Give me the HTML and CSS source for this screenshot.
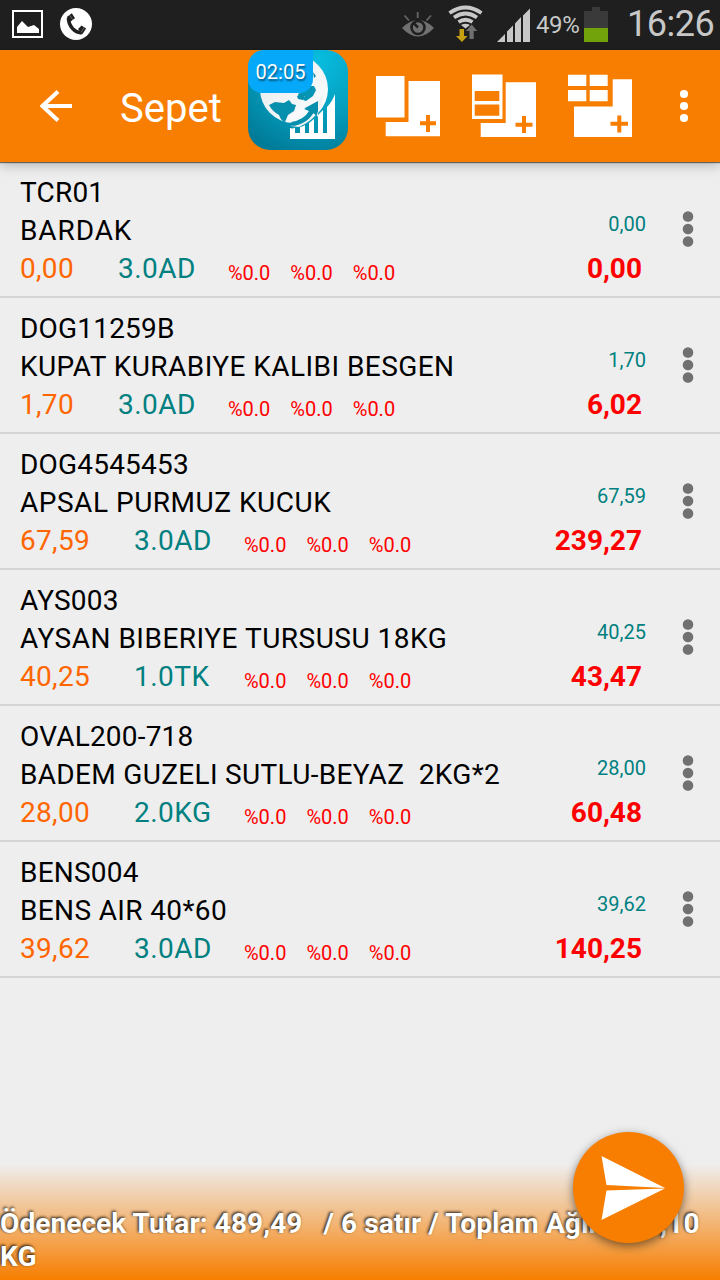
FILE: index.html
```html
<!DOCTYPE html>
<html lang="tr">
<head>
<meta charset="utf-8">
<title>Sepet</title>
<link rel="stylesheet" href="styles.css">
</head>
<body>
<div class="screen">
  <header class="status">
    <svg class="st-photo" width="32" height="50" viewBox="0 0 32 50"><rect x="1" y="11" width="29" height="26" fill="none" stroke="#fff" stroke-width="2"/><path d="M5 33v-6l5-6 6 6 6-2 5 4v4z" fill="#fff"/></svg>
    <svg class="st-call" width="32" height="50" viewBox="0 0 32 50"><circle cx="16" cy="24" r="16" fill="#fff"/><path d="M8.500 18C8.500 26 15 33.500 22 32.500" fill="none" stroke="#1f1f1f" stroke-width="3.600"/><path d="M6.800 17l5-3.700 3.200 4.900-4.800 3.600zM18 29l3.500-3.600 4.600 3-3.600 5.600z" fill="#1f1f1f"/><path d="M9.500 15l3.500 5M24.500 27.200l-3.500 5.200" stroke="#888" stroke-width=".7"/></svg>
    <svg class="st-eye" width="32" height="50" viewBox="0 0 32 50"><path d="M0 28Q16 12 32 28 16 45 0 28z" fill="#707070"/><circle cx="16" cy="27.500" r="6.500" fill="none" stroke="#1f1f1f" stroke-width="2.600"/><path d="M16 27.500l-4.500-4.500" stroke="#1f1f1f" stroke-width="2.500"/><path d="M15.700 12v6M2.500 15.500l4.500 5M29 15.500l-4.500 5" stroke="#666" stroke-width="1.800"/></svg>
    <svg class="st-wifi" width="36" height="50" viewBox="0 0 36 50"><g fill="none" stroke="#c8c8c8" stroke-width="3.800"><path d="M1.500 13Q17.500 2 33.500 13M6 17.500Q17.500 9.500 29 17.500M10.500 22q7-4.500 14 0"/></g><path d="M13 25q4.500-2.500 9 0l-4.500 3.500z" fill="#c8c8c8"/><path d="M11.500 29h4.500v7h3.500L14 42l-6-6h3.500z" fill="#c5a012"/><path d="M21.500 39v-8H18l5.700-6.500 5.500 6.500h-3.500v8z" fill="#707070"/></svg>
    <svg class="st-signal" width="34" height="50" viewBox="0 0 34 50"><path d="M0 42l8-8v8zM10 42V31.500l6-6V42zM18 42V23.500l6-6.500v25zM26 42V15.500l7-7V42z" fill="#c8c8c8"/></svg>
    <span class="percent">49%</span>
    <svg class="st-battery" width="24" height="50" viewBox="0 0 24 50"><path d="M0 11h8V7h8v4h8v17H0z" fill="#3a3a3a"/><path d="M0 28h24v14H0z" fill="#73a30b"/></svg>
    <span class="clock">16:26</span>
  </header>

  <nav class="toolbar">
    <svg class="back" width="32" height="32" viewBox="0 0 32 32"><path d="M18 1.500L2.500 16 18 30.500M2 16h30" fill="none" stroke="#fff" stroke-width="4"/></svg>
    <h1 class="title">Sepet</h1>
    <div class="app">
      <svg width="100" height="100" viewBox="0 0 100 100">
        <defs>
          <radialGradient id="teal" cx=".7" cy=".1" r="1"><stop offset="0" stop-color="#08bde0"/><stop offset=".55" stop-color="#059dbd"/><stop offset="1" stop-color="#007b98"/></radialGradient>
          <linearGradient id="globe" x1="0" y1="0" x2="1" y2="1"><stop offset="0" stop-color="#e4e8ea"/><stop offset="1" stop-color="#fff"/></linearGradient>
        </defs>
        <rect width="100" height="100" rx="22" fill="url(#teal)"/>
        <circle cx="46" cy="39" r="34" fill="url(#globe)"/>
        <path d="M66 36l2 4-3 6-7 5-3-1 2-4-6 2-1-4 7-4v-4z" fill="#0795b5"/>
        <path d="M21 55l6-3 9 1 5-3 3 4 4 1-2 6-6 4-3 7q-4-1-6-7-7-4-10-10z" fill="#078fae"/>
        <path d="M49 46l5-2 3 3-2 3-5-1z" fill="#078fae"/>
        <path d="M65 22l3 4-2 2z" fill="#078fae"/>
        <path d="M41 74Q56 71 62 61l-5-3 13-7v15l-4-3Q58 75 46 78z" fill="#078fae"/>
        <path d="M42 76Q59 75 66 62l4 5V51l5-6q-1 22-24 32z" fill="#eef2f3"/>
        <path d="M43 72Q56 70 61 61l-5-2 14-7-1 14-4-3Q58 73 46 76z" fill="#078fae"/>
        <path d="M42 78q3 1 5-.5V83h5v-6q3-.5 5-2v8h4V73l5-4v14h4V65l5-5v23h4V57q5-5 8-13v45H42z" fill="#fff"/>
      </svg>
      <span class="timer">02:05</span>
    </div>
    <svg class="tool t1" width="64" height="64" viewBox="0 0 64 64"><path d="M0 2h28.500v41.500H0zM32.500 7H64v55.300H9.700V48h22.800z" fill="#fff"/><path d="M52 41v17M44 49.300h16" stroke="#f77e00" stroke-width="4"/></svg>
    <svg class="tool t2" width="64" height="64" viewBox="0 0 64 64"><path d="M0 .5h30.500V45H0zM33.700 8.300H64V63H8.700V49h25z" fill="#fff"/><path d="M2.700 17h24.600v10H2.700zM2.700 30.500h24.600v11.300H2.700z" fill="#f77e00"/><path d="M52 42v17M43.500 50.700h17" stroke="#f77e00" stroke-width="4"/></svg>
    <svg class="tool t3" width="64" height="64" viewBox="0 0 64 64"><path d="M0 .7h18.300V12H0zM21.700.7h18V12h-18zM0 16h18.300v11.300H0zM21.700 16h18v11.300h-18zM44.700 5.300H64V63H6V32.500h38.700z" fill="#fff"/><path d="M51.300 41.500V58.500M42.500 49.800h17.500" stroke="#f77e00" stroke-width="4"/></svg>
    <svg class="overflow" width="10" height="34" viewBox="0 0 10 34"><g fill="#fff"><circle cx="5" cy="5" r="4.100"/><circle cx="5" cy="17" r="4.100"/><circle cx="5" cy="29" r="4.100"/></g></svg>
  </nav>

  <main class="list"></main>

  <footer class="summary">Ödenecek Tutar: 489,49&nbsp;&nbsp; / 6 satır / Toplam Ağırlık:&nbsp;4,10 KG</footer>
  <button class="send" aria-label="Gönder"><svg width="111" height="111" viewBox="0 0 111 111"><path d="M28.500 24L92 56 33.500 53zM28.500 88L92 56.400 33.500 58.500z" fill="#fff"/></svg></button>
</div>
<script src="list.js"></script>
</body>
</html>
```
FILE: styles.css
```css
* { box-sizing: border-box; }
body { margin: 0; background: #eee; font-family: Roboto, "Noto Sans", sans-serif; }
.screen { position: relative; width: 720px; height: 1280px; overflow: hidden; display: flex; flex-direction: column; background: #eee; }
svg { display: block; flex: none; }

.status { display: flex; height: 50px; flex: none; background: #1f1f1f; color: #c8c8c8; padding-left: 12px; line-height: 50px; white-space: nowrap; }
.st-call { margin-left: 16px; }
.st-eye { margin-left: 310px; }
.st-wifi { margin-left: 14px; }
.st-signal { margin-left: 13px; }
.percent { width: 48px; margin-left: 5px; font-size: 24px; letter-spacing: -0.4px; }
.st-battery { margin-left: 0; }
.clock { margin-left: 19px; font-size: 36px; line-height: 48px; letter-spacing: -0.5px; }

.toolbar { position: relative; z-index: 1; display: flex; align-items: center; height: 112px; flex: none; padding-left: 40px; background: #f77e00; box-shadow: 0 1px 1px rgba(0,0,0,.5), 0 3px 12px rgba(0,0,0,.25); }
.title { width: 128px; margin: 5px 0 0 48px; color: #fff; font-size: 40px; font-weight: 400; line-height: 48px; }
.app { position: relative; align-self: flex-start; width: 100px; height: 100px; }
.timer { position: absolute; left: 0; top: 0; width: 65px; height: 43px; border-radius: 16px 0 14px 14px; background: #06a9f9; color: #fff; font-size: 20px; line-height: 44px; text-align: center; text-shadow: 1px 2px 2px rgba(0,0,0,.5); }
.tool { margin-left: 32px; }
.t1 { margin-left: 28px; }
.overflow { margin-left: 47px; }

.list { display: flex; flex-direction: column; }
.item { display: flex; height: 136px; padding: 12px 0 0 20px; border-bottom: 2px solid #d5d5d5; }
.info { flex: 1; white-space: pre; font-size: 28px; line-height: 38px; color: #000; }
.code { letter-spacing: 0.2px; }
.numbers { display: flex; align-items: baseline; }
.price { color: #ff6600; letter-spacing: 0.3px; margin-right: 44px; }
.qty { color: #008080; letter-spacing: 0.5px; width: 77px; margin-right: 33px; }
.rates { display: flex; gap: 20px; color: #f00; font-size: 20px; position: relative; top: 2px; }
.amounts { display: flex; flex-direction: column; text-align: right; padding-top: 37px; width: 110px; }
.unit { color: #008080; font-size: 20px; line-height: 26px; }
.total { color: #f00; font-size: 28px; font-weight: 700; line-height: 38px; margin-top: 13px; padding-right: 4px; }
.menu { margin: 37px 26px 0 36px; }

.summary { position: absolute; left: 0; bottom: 0; width: 720px; height: 116px; padding-top: 43px; background: linear-gradient(to bottom, #eee 0%, #f77e00 100%); color: #fff; font-size: 28px; font-weight: 700; line-height: 33px; letter-spacing: 0.08px; text-shadow: -1px -1px 3px rgba(0,0,0,.9); }
.send { position: absolute; left: 572.5px; top: 1132px; width: 111px; height: 111px; padding: 0; border: 0; border-radius: 50%; background: #f77e00; box-shadow: 0 3px 10px rgba(0,0,0,.5); }
```
FILE: list.js
```javascript
// The last value is the tracking of the product name, in px.
const items = [
  ["TCR01", "BARDAK", "0,00", "3.0AD", "0,00", "0,00", 0.9],
  ["DOG11259B", "KUPAT KURABIYE KALIBI BESGEN", "1,70", "3.0AD", "1,70", "6,02", 0.44],
  ["DOG4545453", "APSAL PURMUZ KUCUK", "67,59", "3.0AD", "67,59", "239,27", 0.52],
  ["AYS003", "AYSAN BIBERIYE TURSUSU 18KG", "40,25", "1.0TK", "40,25", "43,47", 0.5],
  ["OVAL200-718", "BADEM GUZELI SUTLU-BEYAZ  2KG*2", "28,00", "2.0KG", "28,00", "60,48", 0.32],
  ["BENS004", "BENS AIR 40*60", "39,62", "3.0AD", "39,62", "140,25", 0.36]
];
document.querySelector(".list").innerHTML = items.map(([code, name, price, qty, unit, total, tracking]) => `
<article class="item">
<div class="info"><div class="code">${code}</div><div class="name" style="letter-spacing:${tracking}px">${name}</div><div class="numbers"><span class="price">${price}</span><span class="qty">${qty}</span><span class="rates"><span>%0.0</span><span>%0.0</span><span>%0.0</span></span></div></div>
<div class="amounts"><span class="unit">${unit}</span><span class="total">${total}</span></div>
<svg class="menu" width="12" height="36" viewBox="0 0 12 36"><g fill="#707070"><circle cx="6" cy="5.500" r="5.300"/><circle cx="6" cy="18" r="5.300"/><circle cx="6" cy="30.500" r="5.300"/></g></svg>
</article>`).join("");
```
